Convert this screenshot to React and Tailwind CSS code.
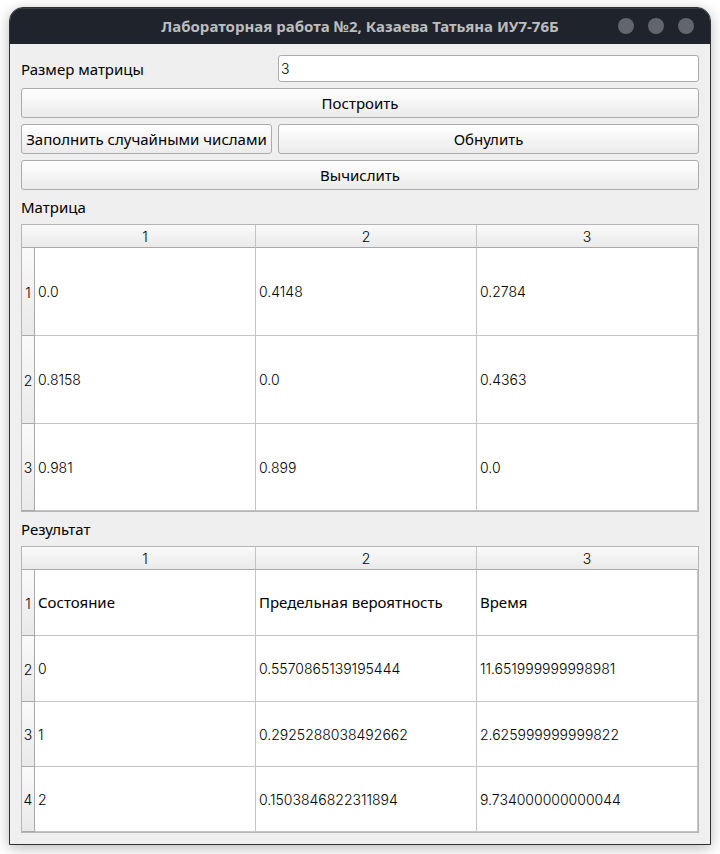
import { useState } from "react";

const MATRIX = [
  ["0.0", "0.4148", "0.2784"],
  ["0.8158", "0.0", "0.4363"],
  ["0.981", "0.899", "0.0"],
];

const RESULT = [
  ["Состояние", "Предельная вероятность", "Время"],
  ["0", "0.5570865139195444", "11.651999999998981"],
  ["1", "0.2925288038492662", "2.625999999999822"],
  ["2", "0.1503846822311894", "9.734000000000044"],
];

function PushButton({ children }) {
  return (
    <button
      type="button"
      className="h-[30px] w-full whitespace-nowrap rounded-[3px] border border-[#ababab] bg-linear-to-b from-white to-[#ebebeb] text-center leading-5 active:from-[#e4e4e4] active:to-[#dcdcdc]"
    >
      {children}
    </button>
  );
}

function Grid({ id, rows, rowClass }) {
  return (
    <table
      aria-labelledby={id}
      className="w-full table-fixed border-separate border-spacing-0 border border-[#b5b5b5] bg-white"
    >
      <colgroup>
        <col className="w-[13px]" />
        <col />
        <col />
        <col />
      </colgroup>
      <thead>
        <tr className="h-[23px] bg-linear-to-b from-[#fafafa] to-[#e9e9e9] font-[Inter,'Noto_Sans',sans-serif] text-sm leading-5">
          <td className="border-b border-[#a9a9a9] p-0" />
          {rows[0].map((_, i) => (
            <th
              key={i}
              scope="col"
              className="border-r border-b border-r-[#c4c4c4] border-b-[#a9a9a9] p-0 pt-0.5 font-light last:border-r-transparent"
            >
              {i + 1}
            </th>
          ))}
        </tr>
      </thead>
      <tbody>
        {rows.map((row, r) => (
          <tr key={r} className={rowClass}>
            <th
              scope="row"
              className="border-r border-b border-[#a9a9a9] bg-linear-to-b from-[#fafafa] to-[#e9e9e9] p-0 pt-0.5 font-[Inter,'Noto_Sans',sans-serif] text-sm font-light"
            >
              {r + 1}
            </th>
            {row.map((cell, c) => (
              <td
                key={c}
                className="whitespace-nowrap border-r border-b border-[#c4c4c4] pt-px pr-0 pb-0 pl-[3px] font-[Inter,'Noto_Sans',sans-serif] text-sm font-light"
              >
                {/^[0-9]/.test(cell) ? (
                  cell
                ) : (
                  <span className="font-['Noto_Sans',sans-serif] text-[15px] font-normal">{cell}</span>
                )}
              </td>
            ))}
          </tr>
        ))}
      </tbody>
    </table>
  );
}

export default function App() {
  const [size, setSize] = useState("3");
  return (
    <div className="bg-white px-[9px] pt-[7px] pb-[9px] font-['Noto_Sans',sans-serif] text-[15px] leading-[22px] text-black">
      <main className="overflow-hidden rounded-t-[14px] border border-[#303134] bg-[#efefef] shadow-[0_3px_14px_rgba(0,0,0,0.28)]">
        <header className="flex h-9 items-center border-t border-[#3a3e45] bg-[#1f232c] px-4 pb-0.5">
          <div className="w-19" />
          <h1 className="grow whitespace-nowrap text-center text-[15px] leading-5 font-bold text-[#bcbdbf]">
            Лабораторная работа №2, Казаева Татьяна ИУ7-76Б
          </h1>
          <div className="flex w-19 gap-3.5">
            <button type="button" aria-label="Свернуть" className="size-4 rounded-full bg-[#62656e]" />
            <button type="button" aria-label="Развернуть" className="size-4 rounded-full bg-[#62656e]" />
            <button type="button" aria-label="Закрыть" className="size-4 rounded-full bg-[#62656e]" />
          </div>
        </header>
        <div className="flex flex-col gap-1.5 p-[11px]">
          <div className="grid grid-cols-[251px_1fr] gap-1.5">
            <label htmlFor="size" className="self-center">
              Размер матрицы
            </label>
            <input
              id="size"
              value={size}
              onChange={(e) => setSize(e.target.value)}
              className="h-[27px] w-full min-w-0 rounded-[3px] border border-[#ababab] bg-white px-0.5 font-[Inter,'Noto_Sans',sans-serif] text-sm font-light outline-none"
            />
            <div className="col-span-2">
              <PushButton>Построить</PushButton>
            </div>
            <PushButton>Заполнить случайными числами</PushButton>
            <PushButton>Обнулить</PushButton>
            <div className="col-span-2">
              <PushButton>Вычислить</PushButton>
            </div>
          </div>
          <h2 id="matrix">Матрица</h2>
          <Grid id="matrix" rows={MATRIX} rowClass="h-22 last:h-[87px]" />
          <h2 id="result">Результат</h2>
          <Grid id="result" rows={RESULT} rowClass="h-[66px] nth-[n+3]:h-[65px]" />
        </div>
      </main>
    </div>
  );
}
